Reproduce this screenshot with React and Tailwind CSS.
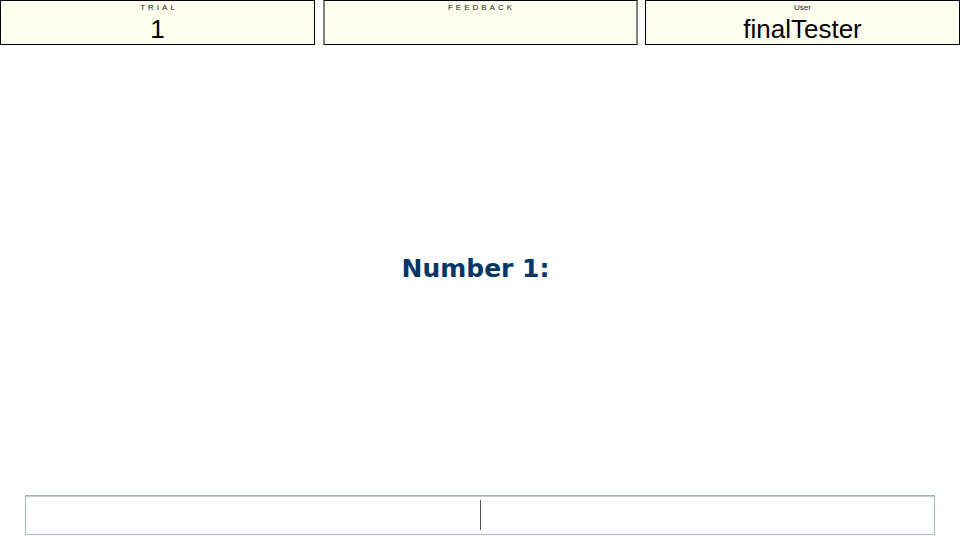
import React from 'react';

const InfoBox = ({ label, value, spaced, muted }) => (
  <div
    className={`w-[315px] h-[45px] bg-[#fffff0] border border-black flex flex-col items-center ${
      muted ? 'border-l-2 border-l-[#808080] border-r-2 border-r-[#808080]' : ''
    }`}
  >
    <div
      className={`mt-[2px] text-[8px] leading-[10px] text-[#222] ${spaced ? 'tracking-[3px] pl-[3px]' : ''}`}
    >
      {label}
    </div>
    <div className="mt-[2px] text-[26px] leading-[28px] text-black">{value}</div>
  </div>
);

export default function App() {
  return (
    <div
      className="w-[960px] h-[540px] bg-white flex flex-col"
      style={{ fontFamily: '"Liberation Sans", Arial, sans-serif' }}
    >
      {/* header boxes */}
      <div className="flex justify-between">
        <InfoBox label="TRIAL" value="1" spaced />
        <InfoBox label="FEEDBACK" value="" spaced muted />
        <InfoBox label="User" value="finalTester" />
      </div>

      {/* prompt */}
      <div className="mt-[209px] h-[29px] flex justify-center pr-[9px]">
        <h1
          className="text-[25px] leading-[29px] font-bold text-[#053666]"
          style={{ fontFamily: '"DejaVu Sans", Verdana, sans-serif' }}
        >
          Number 1:
        </h1>
      </div>

      {/* answer input */}
      <div className="mt-[212px] mx-[25px] h-[40px] border border-[#9dc1e5] border-t-[#a3b3c6] shadow-[inset_0_1px_0_#c9ced6] flex items-center justify-center">
        <span className="w-px h-[30px] bg-[#555]" />
      </div>
    </div>
  );
}
